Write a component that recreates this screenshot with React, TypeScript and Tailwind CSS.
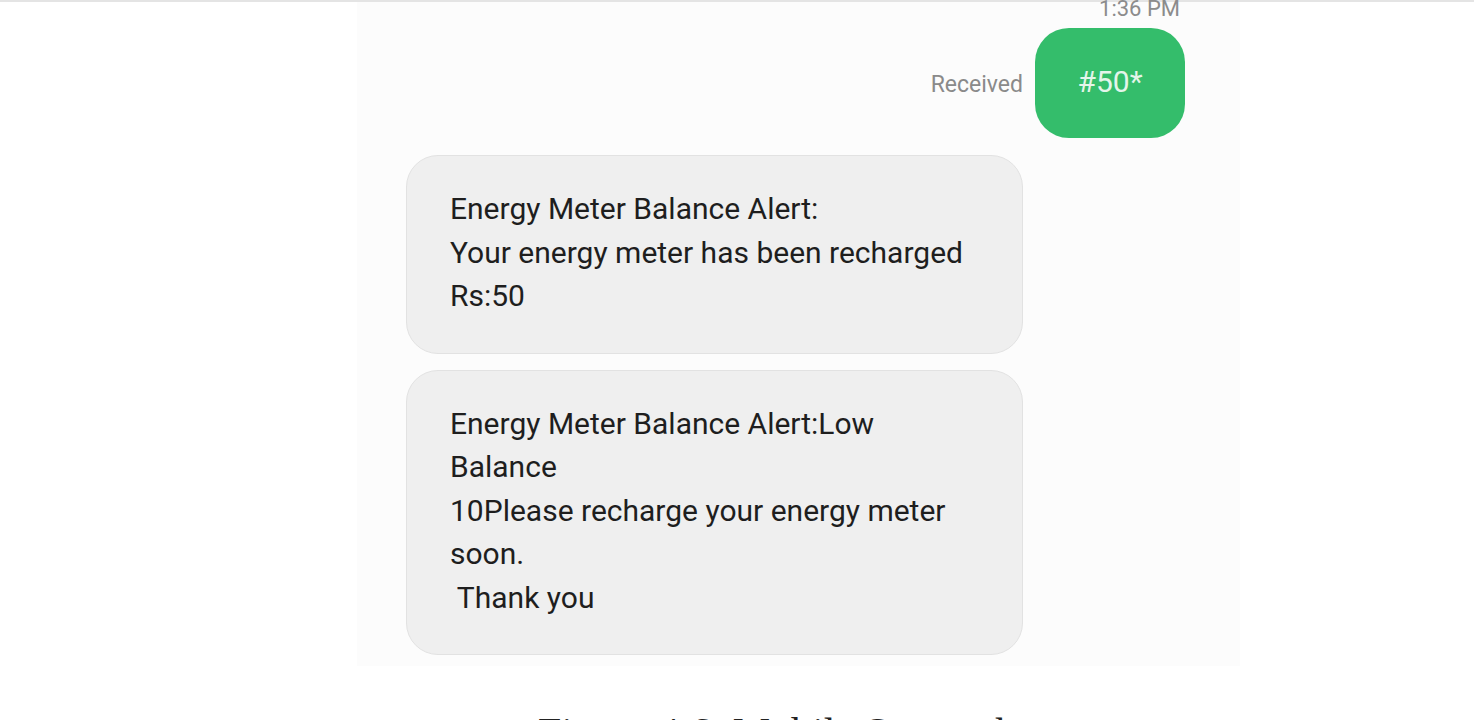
export default function App() {
  const bubbles = [
    ["Energy Meter Balance Alert:", "Your energy meter has been recharged", "Rs:50"],
    ["Energy Meter Balance Alert:Low", "Balance", "10Please recharge your energy meter", "soon.", " Thank you"],
  ]

  return (
    <div className="h-[720px] w-full overflow-hidden bg-white font-['Roboto',sans-serif]">
      {/* top edge of the page */}
      <div className="h-[2px] bg-[#e4e4e4]" />

      <div className="pl-[357px]">
        {/* phone screenshot */}
        <div className="flex h-[664px] w-[883px] flex-col bg-[#fcfcfc] pr-[55px] pl-[49px]">
          <div className="-mt-[6px] flex justify-end pr-[5px] text-[22px] leading-[26px] text-[#8c8c8c]">
            1:36 PM
          </div>

          <div className="mt-[6px] flex items-center justify-end gap-[12px]">
            <span className="pt-[4px] text-[23px] text-[#8a8a8a]">Received</span>
            <div className="flex h-[110px] w-[150px] items-center justify-center rounded-[34px] bg-[#34bd6b] pb-[4px] text-[30px] text-[#e4f5ea]">
              #50*
            </div>
          </div>

          <div className="mt-[17px] flex flex-col gap-[16px]">
            {bubbles.map((lines, i) => (
              <div
                key={i}
                className="w-[617px] rounded-[32px] border border-[#e2e2e2] bg-[#efefef] pt-[31px] pb-[35px] pl-[43px] text-[30px] leading-[43.5px] text-[#1e1e1e]"
              >
                {lines.map((line, j) => (
                  <div key={j} className="whitespace-pre">
                    {line}
                  </div>
                ))}
              </div>
            ))}
          </div>
        </div>
      </div>

      {/* figure caption, cut off by the page edge */}
      <div className="mt-[46px] pl-[538px] font-['Liberation_Serif',serif] text-[42px] leading-[42px] text-[#222]">
        Figure 4.6: Mobile Screenshot
      </div>
    </div>
  )
}
